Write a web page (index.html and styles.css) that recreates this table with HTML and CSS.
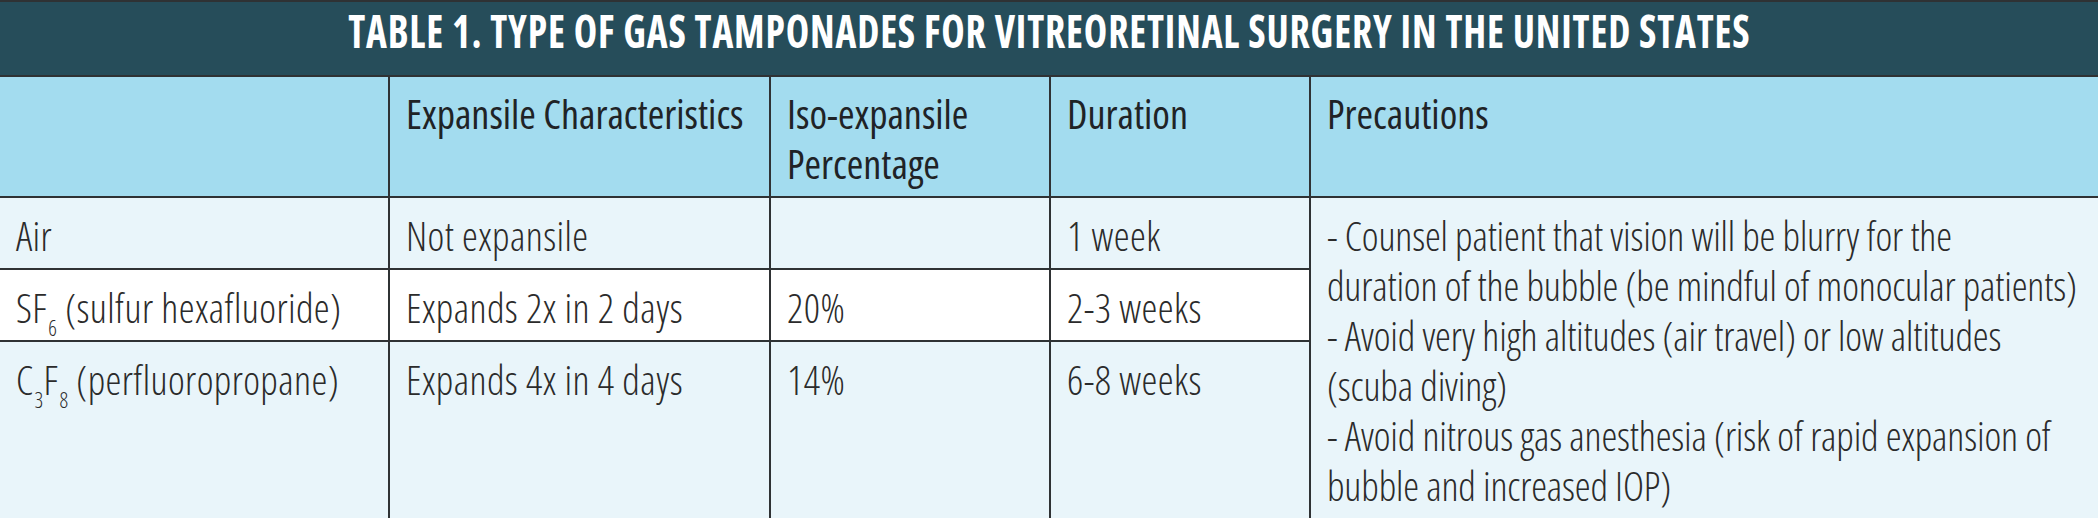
FILE: index.html
```html
<!DOCTYPE html>
<html lang="en">
<head>
<meta charset="utf-8">
<title>Table 1. Type of Gas Tamponades</title>
<link rel="stylesheet" href="styles.css">
</head>
<body>
<div class="gas-table">
  <div class="title"><span class="title-text">TABLE 1. TYPE OF GAS TAMPONADES FOR VITREORETINAL SURGERY IN THE UNITED STATES</span></div>

  <div class="cell head"></div>
  <div class="cell head">Expansile Characteristics</div>
  <div class="cell head">Iso-expansile<br>Percentage</div>
  <div class="cell head">Duration</div>
  <div class="cell head">Precautions</div>

  <div class="cell row-a">Air</div>
  <div class="cell row-a">Not expansile</div>
  <div class="cell row-a"></div>
  <div class="cell row-a">1 week</div>
  <div class="cell row-a precautions">
    <div>- Counsel patient that vision will be blurry for the<br>duration of the bubble (be mindful of monocular patients)</div>
    <div>- Avoid very high altitudes (air travel) or low altitudes<br>(scuba diving)</div>
    <div>- Avoid nitrous gas anesthesia (risk of rapid expansion of<br>bubble and increased IOP)</div>
  </div>

  <div class="cell row-b">SF<sub>6</sub> (sulfur hexafluoride)</div>
  <div class="cell row-b">Expands 2x in 2 days</div>
  <div class="cell row-b">20%</div>
  <div class="cell row-b">2-3 weeks</div>

  <div class="cell row-a">C<sub>3</sub>F<sub>8</sub> (perfluoropropane)</div>
  <div class="cell row-a">Expands 4x in 4 days</div>
  <div class="cell row-a">14%</div>
  <div class="cell row-a">6-8 weeks</div>
</div>
</body>
</html>
```
FILE: styles.css
```css
html, body {
  margin: 0;
  padding: 0;
  background: #ffffff;
}

body {
  overflow: hidden;
}

.gas-table {
  display: grid;
  grid-template-columns: 388px 379px 278px 258px 1fr;
  grid-template-rows: 73px 119px 70px 70px auto;
  gap: 2px;
  padding-top: 2px;
  background: #2f3234;
  font-family: "Open Sans", "Liberation Sans", sans-serif;
  font-stretch: 75%;
  color: #2b2b2b;
}

.title {
  grid-column: 1 / -1;
  background: #264d5a;
  color: #ffffff;
  font-weight: 700;
  font-size: 46px;
  line-height: 46px;
  letter-spacing: 1px;
  text-align: center;
  padding-top: 5px;
  box-sizing: border-box;
}

.title-text {
  display: inline-block;
  transform: scaleX(0.86);
}

.cell {
  padding: 13px 16px 0;
  font-size: 40px;
  line-height: 50px;
  font-weight: 300;
  letter-spacing: 0.4px;
}

.head {
  background: #a3dcef;
  color: #1f2326;
  font-weight: 500;
  letter-spacing: 0;
  padding-top: 12px;
}

.row-a {
  background: #e9f5fa;
}

.row-b {
  background: #ffffff;
}

.precautions {
  grid-row: span 3;
  padding-bottom: 20px;
  padding-right: 8px;
  white-space: nowrap;
  letter-spacing: -0.15px;
}

sub {
  font-size: 0.53em;
  vertical-align: -0.62em;
  line-height: 0;
  margin-left: 1px;
}
```
